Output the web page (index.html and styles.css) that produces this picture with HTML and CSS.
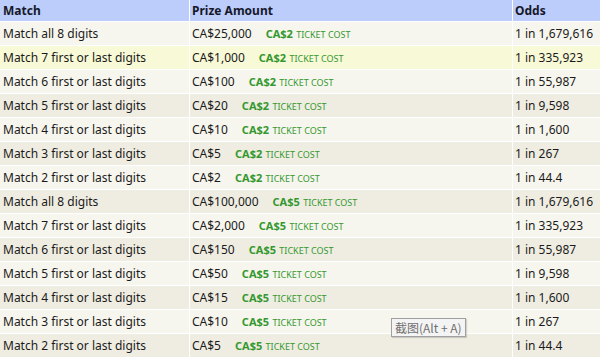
FILE: index.html
```html
<!DOCTYPE html>
<html>
<head>
<meta charset="utf-8">
<link rel="stylesheet" href="styles.css">
</head>
<body>
<table class="odds">
  <thead>
    <tr><th class="c1">Match</th><th class="c2">Prize Amount</th><th class="c3">Odds</th></tr>
  </thead>
  <tbody>
    <tr><td>Match all 8 digits</td><td>CA$25,000<span class="cost"><b>CA$2</b> ticket cost</span></td><td>1 in 1,679,616</td></tr>
    <tr class="hover"><td>Match 7 first or last digits</td><td>CA$1,000<span class="cost"><b>CA$2</b> ticket cost</span></td><td>1 in 335,923</td></tr>
    <tr><td>Match 6 first or last digits</td><td>CA$100<span class="cost"><b>CA$2</b> ticket cost</span></td><td>1 in 55,987</td></tr>
    <tr><td>Match 5 first or last digits</td><td>CA$20<span class="cost"><b>CA$2</b> ticket cost</span></td><td>1 in 9,598</td></tr>
    <tr><td>Match 4 first or last digits</td><td>CA$10<span class="cost"><b>CA$2</b> ticket cost</span></td><td>1 in 1,600</td></tr>
    <tr><td>Match 3 first or last digits</td><td>CA$5<span class="cost"><b>CA$2</b> ticket cost</span></td><td>1 in 267</td></tr>
    <tr><td>Match 2 first or last digits</td><td>CA$2<span class="cost"><b>CA$2</b> ticket cost</span></td><td>1 in 44.4</td></tr>
    <tr><td>Match all 8 digits</td><td>CA$100,000<span class="cost"><b>CA$5</b> ticket cost</span></td><td>1 in 1,679,616</td></tr>
    <tr><td>Match 7 first or last digits</td><td>CA$2,000<span class="cost"><b>CA$5</b> ticket cost</span></td><td>1 in 335,923</td></tr>
    <tr><td>Match 6 first or last digits</td><td>CA$150<span class="cost"><b>CA$5</b> ticket cost</span></td><td>1 in 55,987</td></tr>
    <tr><td>Match 5 first or last digits</td><td>CA$50<span class="cost"><b>CA$5</b> ticket cost</span></td><td>1 in 9,598</td></tr>
    <tr><td>Match 4 first or last digits</td><td>CA$15<span class="cost"><b>CA$5</b> ticket cost</span></td><td>1 in 1,600</td></tr>
    <tr><td>Match 3 first or last digits</td><td>CA$10<span class="cost"><b>CA$5</b> ticket cost</span></td><td>1 in 267</td></tr>
    <tr><td>Match 2 first or last digits</td><td>CA$5<span class="cost"><b>CA$5</b> ticket cost</span></td><td>1 in 44.4</td></tr>
  </tbody>
</table>
<div class="tip">截图(Alt + A)</div>
</body>
</html>
```
FILE: styles.css
```css
html, body {
  margin: 0;
  padding: 0;
  background: #ffffff;
}
body {
  font-family: "Noto Sans", "Open Sans", sans-serif;
  font-size: 12px;
  color: #1b1b1b;
  position: relative;
  height: 359px;
  overflow: hidden;
}
.odds {
  width: 600px;
  border-collapse: collapse;
  table-layout: fixed;
}
.odds th, .odds td {
  border: 1px solid #ffffff;
  padding: 0 0 0 2px;
  text-align: left;
  white-space: nowrap;
  overflow: hidden;
}
.odds tr > :first-child { border-left: 0; padding-left: 3px; }
.odds tr > :last-child { border-right: 0; }
.odds thead tr > * { border-top: 0; }
.c1 { width: 186px; }
.c2 { width: 320px; }
.c3 { width: 86px; }
.odds th {
  height: 21px;
  background: #bccdfb;
  color: #16182a;
  font-weight: 700;
  font-size: 12px;
}
.odds td {
  height: 23px;
}
.odds tbody tr:nth-child(odd) td { background: #f7f6ee; }
.odds tbody tr:nth-child(even) td { background: #efede2; }
.odds tbody tr.hover td { background: #f8f9d6; }
.cost {
  margin-left: 14px;
  color: #34982f;
  text-transform: uppercase;
  font-size: 9px;
}
.cost b {
  font-size: 11px;
  font-weight: 700;
  text-transform: none;
  margin-right: 1px;
}
.tip {
  position: absolute;
  left: 391px;
  top: 318px;
  height: 17px;
  padding: 0 3px;
  border: 1px solid #a0a0a0;
  background: #f4f4f4;
  color: #707070;
  font-family: "Noto Sans CJK SC", sans-serif;
  font-size: 12px;
  line-height: 17px;
  box-shadow: 1px 1px 1px rgba(0,0,0,0.15);
}
```
